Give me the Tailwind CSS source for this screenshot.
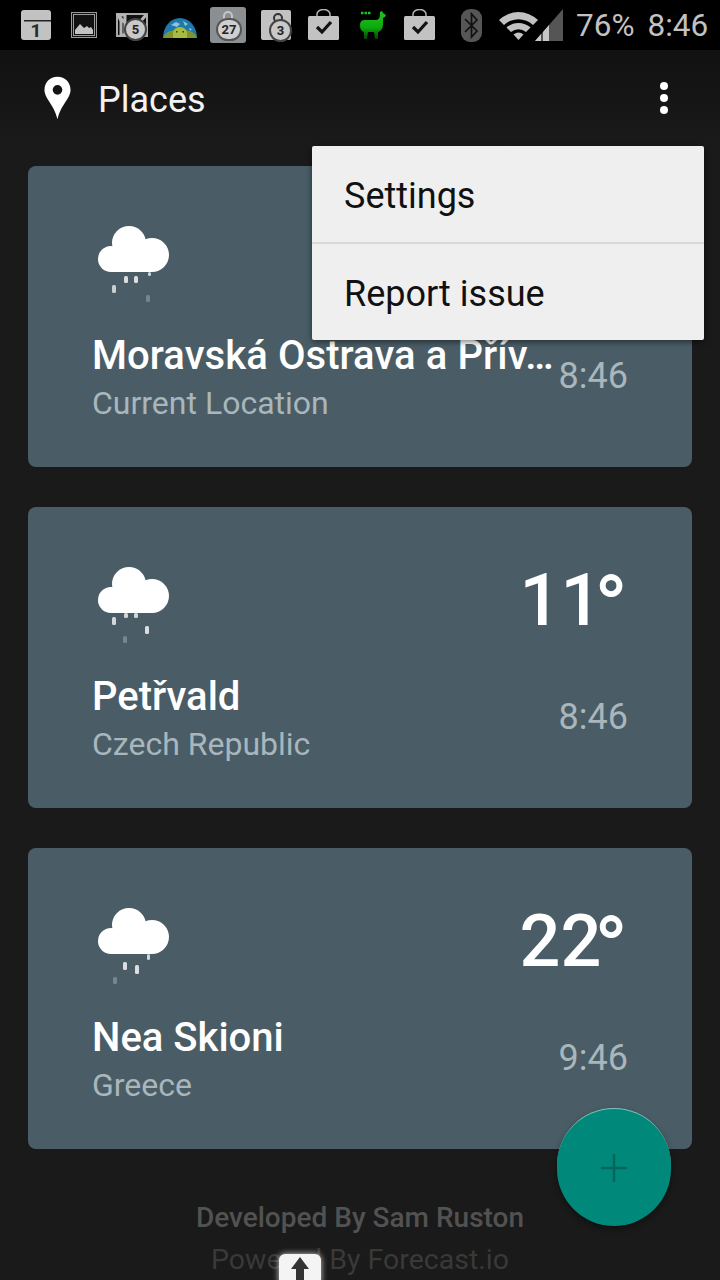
<!DOCTYPE html>
<html>
<head>
<meta charset="utf-8">
<script src="https://cdn.jsdelivr.net/npm/@tailwindcss/browser@4"></script>
</head>
<body class="m-0 bg-[#1a1a1a]">
<div class="relative w-[720px] h-[1280px] overflow-hidden bg-[#1a1a1a] font-['Roboto',sans-serif]">

  <!-- status bar -->
  <div class="flex items-center h-[50px] bg-black pl-[21px] text-[#c2c2c2]">
    <div class="relative w-[30px] h-[30px]">
      <svg class="w-[30px] h-[30px]" viewBox="0 0 30 30"><rect width="30" height="30" rx="3" fill="#c2c2c2"/><rect x="3" y="10" width="27" height="1.500" fill="#222"/></svg>
      <span class="absolute left-0 top-[10px] w-[30px] text-center text-[19px] leading-[22px] font-bold text-[#2a2a2a]">1</span>
    </div>
    <svg class="w-[26px] h-[26px] ml-[20px]" viewBox="0 0 26 26"><rect x="0.500" y="0.500" width="25" height="25" fill="#111" stroke="#9a9a9a"/><rect x="2.500" y="2.500" width="21" height="21" fill="#111" stroke="#9a9a9a"/><path d="M4 22 L4 18 L9 12 L13 16 L16 14 L18 16 L20 15 L22 18 V22 Z" fill="#c2c2c2"/></svg>
    <div class="relative w-[32px] h-[26px] ml-[19px]">
      <svg class="w-[32px] h-[24px] mt-[1px]" viewBox="0 0 32 24"><rect x="1" y="1" width="30" height="22" fill="#111" stroke="#aaa" stroke-width="2"/><path d="M2 2 L9 2 L9 22 L5 22 L5 8 Z M2 2 L16 18 L30 2" fill="none" stroke="#b5b5b5" stroke-width="3"/></svg>
      <span class="absolute left-[8px] top-[6px] w-[23px] h-[23px] rounded-full bg-[#c9c9c9] border-2 border-[#444] text-center text-[13px] leading-[19px] font-bold text-[#222]">5</span>
    </div>
    <svg class="w-[34px] h-[22px] ml-[15px] mt-[5px]" viewBox="0 0 34 22"><path d="M0 21 A17 20 0 0 1 34 21 Z" fill="#1f78aa"/><path d="M8 8 l5 -3 l4 2 l-3 3 Z M20 4 l5 3 l-3 2 Z M26 11 l3 1 l-2 2 Z" fill="#8fc3dc"/><path d="M0 21 Q2 15 8 14 Q17 10 26 14 Q32 15 34 21 Z" fill="#7f9433"/><path d="M10 21 V16 A7 6 0 0 1 24 16 V21 Z" fill="#a9bb3f"/><path d="M13 14 h1.500 v1.500 h-1.500 Z M19.500 14 h1.500 v1.500 h-1.500 Z" fill="#33400f"/></svg>
    <div class="relative w-[36px] h-[36px] ml-[13px] mt-[-1px] rounded-[3px] bg-[#8c8f92]">
      <div class="absolute left-[13px] top-[4px] w-[10px] h-[10px] rounded-t-full border-2 border-[#c6c6c6]"></div>
      <span class="absolute left-[6px] top-[11px] w-[26px] h-[23px] rounded-full bg-[#cfcfcf] border-2 border-[#555] text-center text-[13px] leading-[19px] font-bold text-[#222]">27</span>
    </div>
    <div class="relative w-[30px] h-[30px] ml-[15px] rounded-[2px] bg-[#c2c2c2]">
      <div class="absolute left-[12px] top-[3px] w-[10px] h-[10px] rounded-full border-2 border-[#333]"></div>
      <span class="absolute left-[8px] top-[9px] w-[23px] h-[23px] rounded-full bg-[#c9c9c9] border-2 border-[#444] text-center text-[13px] leading-[19px] font-bold text-[#222]">3</span>
    </div>
    <svg class="w-[31px] h-[31px] ml-[17px] mt-[-2px]" viewBox="0 0 31 31"><path d="M9 7 V5 A6.500 4.500 0 0 1 22 5 V7" fill="none" stroke="#b5b5b5" stroke-width="1.500"/><rect x="0" y="7" width="31" height="24" rx="1.500" fill="#c2c2c2"/><path d="M9 18 L14 23 L23 13" fill="none" stroke="#111" stroke-width="3.200"/></svg>
    <svg class="w-[28px] h-[28px] ml-[20px]" viewBox="0 0 28 28"><defs><linearGradient id="llama" x1="0" y1="0" x2="0" y2="1"><stop offset="0" stop-color="#1fc41f"/><stop offset="0.600" stop-color="#0da80d"/><stop offset="1" stop-color="#064006"/></linearGradient></defs><path d="M2 2 h10" stroke="#18c818" stroke-width="2.500" stroke-dasharray="2.500 1"/><path d="M1 14 Q1 9 6 9 H17 Q20 9 21 5 L21 1 L23 0 L24 2 L27 4 L26 6 L24 7 L24 14 Q23 20 19 21 L19 28 H16 L15 21 H9 L8 28 H5 L5 21 Q1 20 1 14 Z" fill="url(#llama)"/></svg>
    <svg class="w-[31px] h-[31px] ml-[17px] mt-[-2px]" viewBox="0 0 31 31"><path d="M9 7 V5 A6.500 4.500 0 0 1 22 5 V7" fill="none" stroke="#b5b5b5" stroke-width="1.500"/><rect x="0" y="7" width="31" height="24" rx="1.500" fill="#c2c2c2"/><path d="M9 18 L14 23 L23 13" fill="none" stroke="#111" stroke-width="3.200"/></svg>
    <svg class="w-[21px] h-[33px] ml-[26px]" viewBox="0 0 21 33"><rect width="21" height="33" rx="9" fill="#565656"/><path d="M4 10 L16 22 L10.500 28 V5 L16 11 L4 23" fill="none" stroke="#111" stroke-width="1.700"/></svg>
    <svg class="w-[39px] h-[30px] ml-[17px]" viewBox="0 0 39 30"><path d="M0 10 A28 28 0 0 1 39 10 L34 15 A21 21 0 0 0 5 15 Z" fill="#c2c2c2"/><path d="M7.500 17.500 A18 18 0 0 1 31.500 17.500 L27 22 A12 12 0 0 0 12 22 Z" fill="#c2c2c2"/><path d="M14.500 24.500 A8 8 0 0 1 24.500 24.500 L19.500 30 Z" fill="#c2c2c2"/></svg>
    <svg class="w-[28px] h-[32px] ml-[-3px]" viewBox="0 0 28 32"><path d="M0 32 L28 0 V32 Z" fill="#555"/><path d="M0 32 L6 25 V32 Z M8 23 L14 16 V32 H8 Z" fill="#c8c8c8"/></svg>
    <span class="ml-[13px] text-[31.500px] leading-[36px] mt-[1px]">76%</span>
    <span class="ml-[13px] text-[31.500px] leading-[36px] mt-[1px]">8:46</span>
  </div>

  <!-- action bar -->
  <div class="flex items-center h-[96px] bg-gradient-to-b from-[#111111] to-[#1a1a1a] pl-[44px] pr-[52px]">
    <svg class="w-[27px] h-[44px]" viewBox="0 0 28 44"><path fill-rule="evenodd" d="M14 0 C6 0 0.500 6 0.500 13.500 C0.500 23 10 28 14 44 C18 28 27.500 23 27.500 13.500 C27.500 6 22 0 14 0 Z M14 8.500 A5 5 0 1 1 14 18.500 A5 5 0 1 1 14 8.500 Z" fill="#fff"/></svg>
    <span class="ml-[27px] text-[36px] leading-[42px] mt-[4px] text-[#f2f2f2]">Places</span>
    <div class="ml-auto flex flex-col gap-[4px]">
      <span class="w-[8px] h-[8px] rounded-full bg-white"></span>
      <span class="w-[8px] h-[8px] rounded-full bg-white"></span>
      <span class="w-[8px] h-[8px] rounded-full bg-white"></span>
    </div>
  </div>

  <!-- cards -->
  <div class="flex flex-col gap-[40px] px-[28px] pt-[20px]">
    <div class="h-[301px] rounded-[8px] bg-[#4a5d66] pl-[64px] pr-[64px] pt-[58px] flex flex-col">
      <div class="flex justify-between h-[111px]">
        <svg class="w-[72px] h-[80px] ml-[6px]" viewBox="0 0 72 80" fill="#fff"><circle cx="13" cy="35" r="13"/><circle cx="31" cy="19" r="17"/><circle cx="54" cy="31" r="17"/><rect x="13" y="28" width="41" height="20"/><rect x="26" y="52" width="4" height="7" rx="1.500" opacity=".8"/><rect x="36" y="52" width="4" height="7" rx="1.500" opacity=".8"/><rect x="50" y="48" width="3" height="4" rx="1.500" opacity=".75"/><rect x="14" y="61" width="4" height="8" rx="1.500" opacity=".7"/><rect x="48" y="71" width="4" height="7" rx="1.500" opacity=".25"/></svg>
      </div>
      <div class="flex justify-between items-start">
        <div>
          <div class="whitespace-nowrap text-[40px] leading-[42px] tracking-[0.08px] font-medium text-white">Moravská Ostrava a Přív…</div>
          <div class="text-[32px] leading-[36px] mt-[8px] text-[#a9b6bb]">Current Location</div>
        </div>
        <span class="text-[36px] leading-[42px] mt-[20px] text-[#a9b6bb]">8:46</span>
      </div>
    </div>

    <div class="h-[301px] rounded-[8px] bg-[#4a5d66] pl-[64px] pr-[64px] pt-[58px] flex flex-col">
      <div class="flex justify-between h-[111px]">
        <svg class="w-[72px] h-[80px] ml-[6px]" viewBox="0 0 72 80" fill="#fff"><circle cx="13" cy="35" r="13"/><circle cx="31" cy="19" r="17"/><circle cx="54" cy="31" r="17"/><rect x="13" y="28" width="41" height="20"/><rect x="26" y="48" width="4" height="5" rx="1.500" opacity=".75"/><rect x="36" y="48" width="4" height="5" rx="1.500" opacity=".75"/><rect x="14" y="52" width="4" height="8" rx="1.500" opacity=".75"/><rect x="47" y="61" width="4" height="8" rx="1.500" opacity=".8"/><rect x="25" y="71" width="4" height="7" rx="1.500" opacity=".25"/></svg>
        <div class="mt-[-6px] h-[84px] whitespace-nowrap text-[72px] leading-[84px] font-medium text-white">1<span class="tracking-[-7px]">1</span><span class="text-[88px] leading-[0] align-[-12px]">°</span></div>
      </div>
      <div class="flex justify-between items-start">
        <div>
          <div class="text-[40px] leading-[42px] font-medium text-white">Petřvald</div>
          <div class="text-[32px] leading-[36px] mt-[8px] text-[#a9b6bb]">Czech Republic</div>
        </div>
        <span class="text-[36px] leading-[42px] mt-[20px] text-[#a9b6bb]">8:46</span>
      </div>
    </div>

    <div class="h-[301px] rounded-[8px] bg-[#4a5d66] pl-[64px] pr-[64px] pt-[58px] flex flex-col">
      <div class="flex justify-between h-[111px]">
        <svg class="w-[72px] h-[80px] ml-[6px]" viewBox="0 0 72 80" fill="#fff"><circle cx="13" cy="35" r="13"/><circle cx="31" cy="19" r="17"/><circle cx="54" cy="31" r="17"/><rect x="13" y="28" width="41" height="20"/><rect x="25" y="56" width="4" height="8" rx="1.500" opacity=".8"/><rect x="37" y="59" width="4" height="9" rx="1.500" opacity=".8"/><rect x="49" y="48" width="3" height="6" rx="1.500" opacity=".75"/><rect x="15" y="71" width="4" height="7" rx="1.500" opacity=".25"/></svg>
        <div class="mt-[-6px] h-[84px] whitespace-nowrap text-[72px] leading-[84px] font-medium text-white">2<span class="tracking-[-7px]">2</span><span class="text-[88px] leading-[0] align-[-12px]">°</span></div>
      </div>
      <div class="flex justify-between items-start">
        <div>
          <div class="text-[40px] leading-[42px] font-medium text-white">Nea Skioni</div>
          <div class="text-[32px] leading-[36px] mt-[8px] text-[#a9b6bb]">Greece</div>
        </div>
        <span class="text-[36px] leading-[42px] mt-[20px] text-[#a9b6bb]">9:46</span>
      </div>
    </div>
  </div>

  <!-- footer -->
  <div class="flex flex-col items-center pt-[52px]">
    <div class="text-[28px] leading-[34px] font-medium text-[#525252]">Developed By Sam Ruston</div>
    <div class="text-[28.500px] leading-[34px] mt-[8px] text-[#393939]">Powered By Forecast.io</div>
  </div>

  <!-- menu -->
  <div class="absolute left-[312px] top-[146px] w-[392px] h-[194px] rounded-[2px] bg-[#efefef] shadow-[0_2px_6px_rgba(0,0,0,0.5)] text-[36px] text-[#111]">
    <div class="h-[98px] pl-[32px] pt-[3px] flex items-center border-b-2 border-[#d8d8d8]">Settings</div>
    <div class="h-[96px] pl-[32px] pt-[3px] flex items-center">Report issue</div>
  </div>

  <!-- FAB -->
  <div class="absolute left-[557px] top-[1108px] w-[114px] h-[118px] rounded-full bg-[#00897b] border-t border-t-[#7fc4bc] shadow-[0_3px_6px_rgba(0,0,0,0.4)] flex items-center justify-center">
    <svg class="w-[26px] h-[28px]" viewBox="0 0 26 28"><path d="M0 14 H26 M13 0 V28" stroke="#04665b" stroke-width="2.500"/></svg>
  </div>

  <!-- handle -->
  <div class="absolute left-[279px] top-[1254px] w-[42px] h-[30px] rounded-t-[6px] bg-[#f4f4f4] shadow-[0_0_6px_rgba(255,255,255,0.8)] flex justify-center">
    <svg class="w-[20px] h-[26px]" viewBox="0 0 20 26"><path d="M10 3 L19 15 H14 V26 H6 V15 H1 Z" fill="#333"/></svg>
  </div>
</div>
</body>
</html>
